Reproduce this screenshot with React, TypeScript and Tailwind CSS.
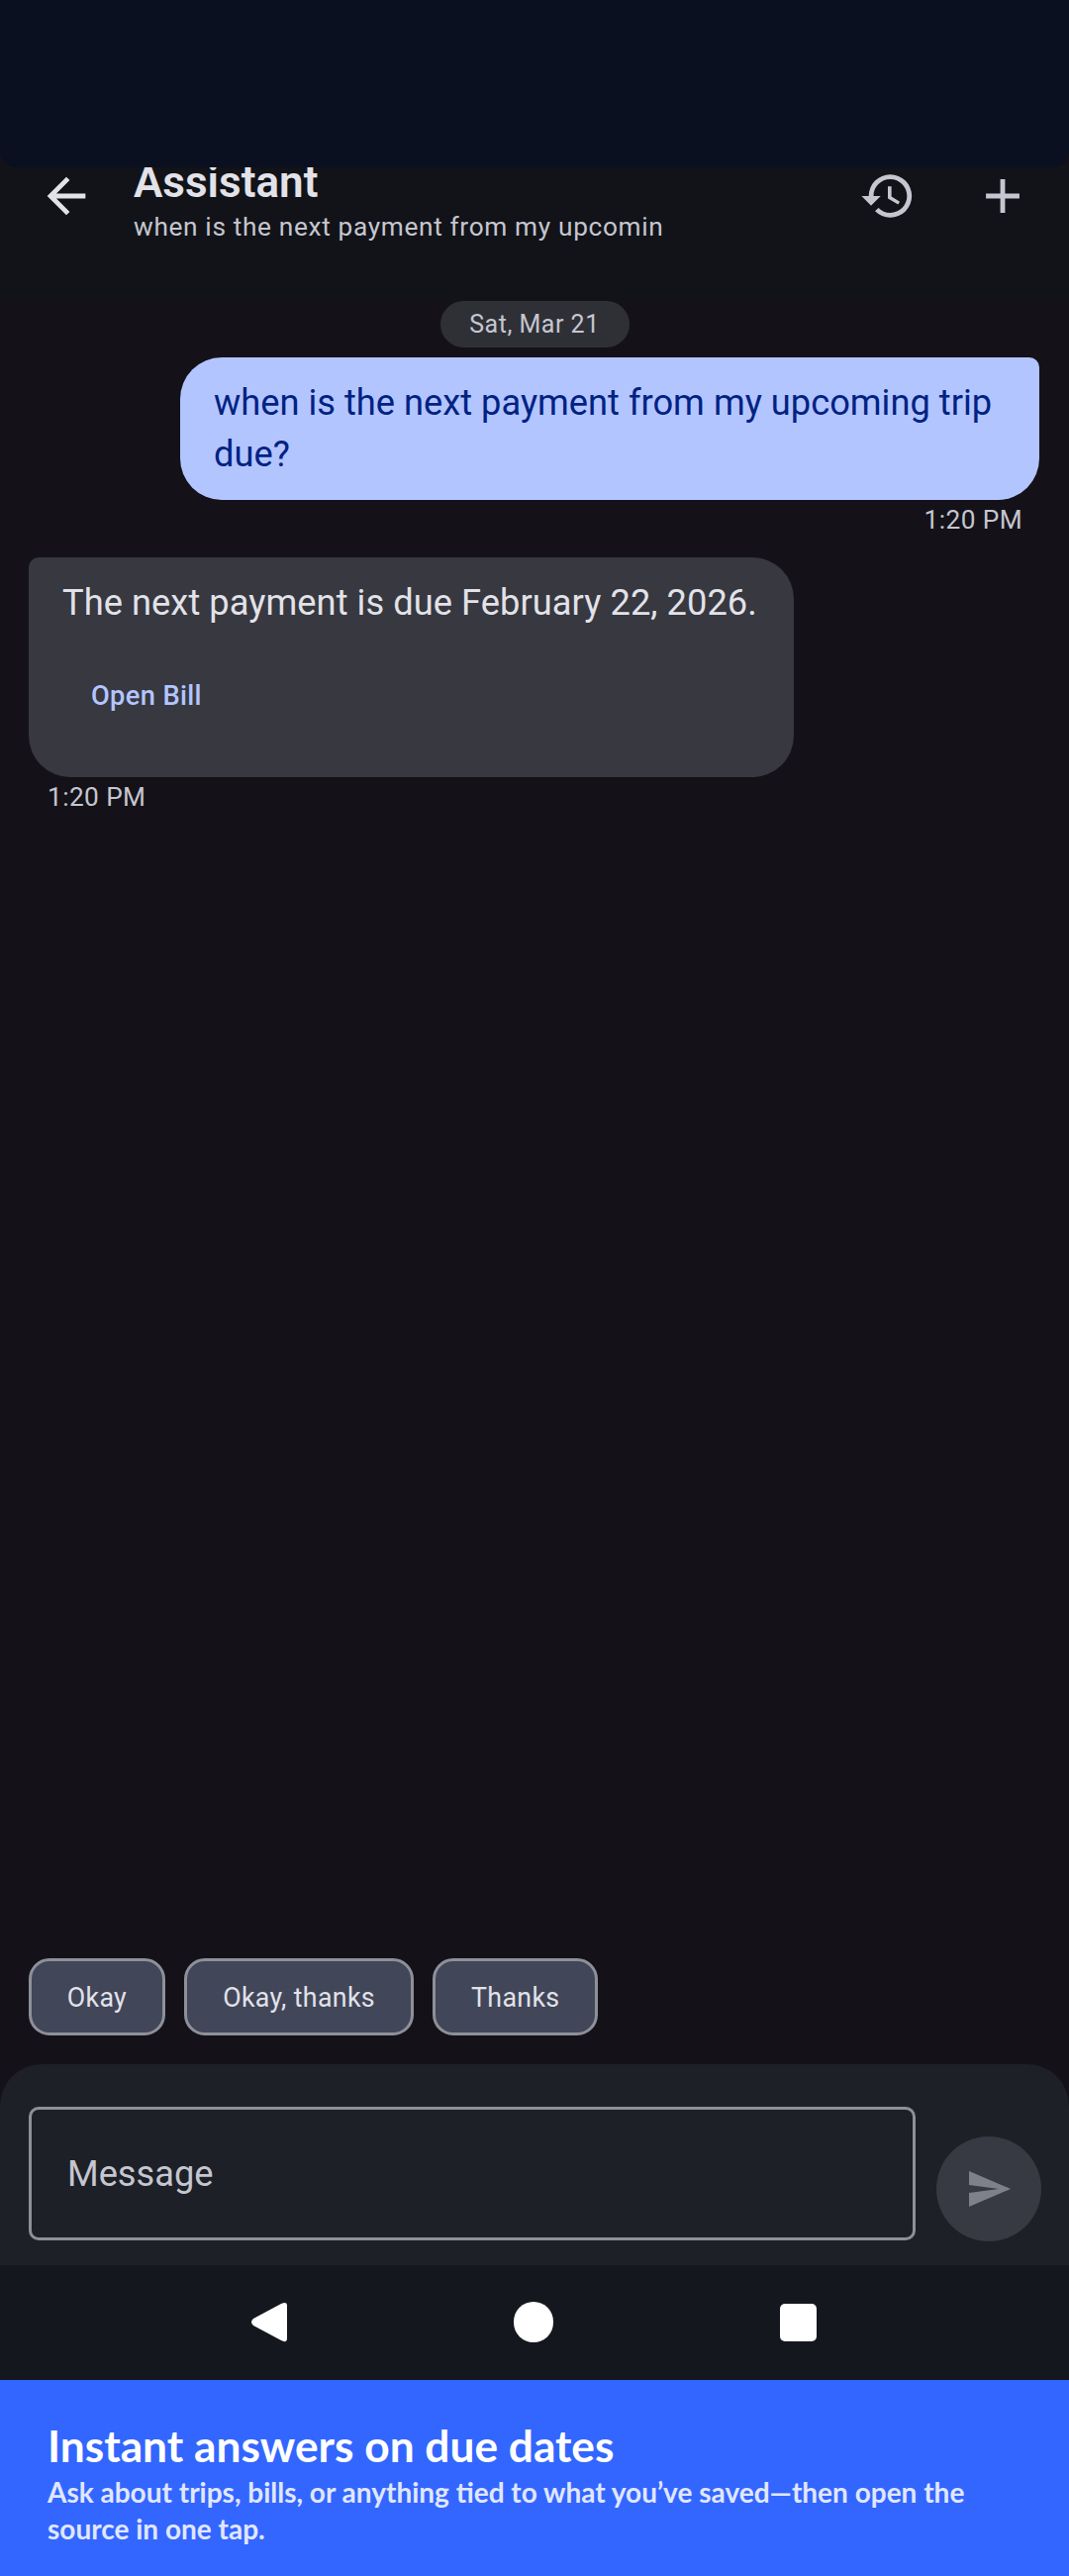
import React from 'react'
import { MdArrowBack, MdHistory, MdAdd, MdSend } from 'react-icons/md'

const REPLIES = ['Okay', 'Okay, thanks', 'Thanks']

function Header() {
  return (
    <header className="h-[135px] shrink-0 flex items-start bg-[#121318] text-[#c5c6d0]">
      <MdArrowBack className="ml-[38px] text-[#e2e2e9] shrink-0" size={58} />
      <div className="ml-[39px] -mt-[8px] flex-1 min-w-0">
        <p className="text-[44px] leading-[46px] font-semibold text-[#e2e2e9]">Assistant</p>
        <p className="text-[26.25px] leading-[36px] mt-[4px] tracking-[0.65px]">when is the next payment from my upcomin</p>
      </div>
      <MdHistory className="shrink-0" size={58} />
      <MdAdd className="ml-[58px] mr-[38px] shrink-0" size={58} />
    </header>
  )
}

function Thread() {
  return (
    <main className="flex-1 flex flex-col">
      <div className="self-center w-[191px] h-[47px] rounded-full bg-[#2f3036] flex items-center justify-center pt-[1px] text-[25px] tracking-[0.5px] text-[#c5c6d0]">
        Sat, Mar 21
      </div>
      <div className="self-end mt-[10px] mr-[30px] w-[868px] h-[144px] rounded-[42px] rounded-tr-[10px] bg-[#b3c5ff] pl-[34px] pr-[30px] py-[20px] text-[36.25px] leading-[52px] text-[#002283]">
        when is the next payment from my upcoming trip due?
      </div>
      <p className="self-end mt-[5px] mr-[47px] h-[30px] text-[26.25px] leading-[30px] tracking-[0.4px] text-[#c5c6d0]">1:20 PM</p>
      <div className="self-start mt-[23px] ml-[29px] w-[773px] h-[222px] rounded-[42px] rounded-tl-[10px] bg-[#373840] pl-[34px] pt-[21px] text-[#e2e2e9]">
        <p className="text-[36.25px] leading-[50px] tracking-[0.05px]">The next payment is due February 22, 2026.</p>
        <p className="mt-[54px] ml-[29px] text-[27.25px] leading-[30px] font-medium tracking-[0.35px] text-[#b3c5ff]">Open Bill</p>
      </div>
      <p className="self-start mt-[5px] ml-[48px] h-[30px] text-[26.25px] leading-[30px] tracking-[0.4px] text-[#c5c6d0]">1:20 PM</p>
      <div className="mt-auto flex gap-[19.5px] pl-[29px] pb-[29px]">
        {REPLIES.map((reply) => (
          <button key={reply} className="h-[78px] px-[35.75px] pt-[2px] rounded-[21px] border-[3px] border-[#8e9099] bg-[#414659] text-[26.75px] tracking-[0.35px] text-[#e2e2e9]">
            {reply}
          </button>
        ))}
      </div>
    </main>
  )
}

function Composer() {
  return (
    <section className="h-[203px] shrink-0 rounded-t-[42px] bg-[#1d2027] flex items-start pt-[43px] pl-[29px]">
      <div className="w-[896px] h-[135px] rounded-[10px] border-[3px] border-[#8e9099] flex items-center pl-[36px] pt-[1px] text-[36.25px] text-[#c5c6d0]">
        Message
      </div>
      <div className="ml-[21px] mt-[30px] w-[106px] h-[106px] rounded-full bg-[#373a42] flex items-center justify-center text-[#7f808c]">
        <MdSend size={48} />
      </div>
    </section>
  )
}

function NavBar() {
  return (
    <nav className="h-[116px] shrink-0 bg-[#15171e] flex items-start pt-[37px] pl-[253px]">
      <svg width="37" height="41" viewBox="0 0 37 41" className="shrink-0">
        <path d="M31 2 L3 17 Q-1 20.5 3 24 L31 39 Q37 42 37 37 L37 4 Q37 -1 31 2 Z" fill="#fff" />
      </svg>
      <div className="ml-[229px] w-[40px] h-[41px] rounded-full bg-white shrink-0" />
      <div className="ml-[229px] mt-[2px] w-[37px] h-[38px] rounded-[5px] bg-white shrink-0" />
    </nav>
  )
}

function Banner() {
  return (
    <footer className="h-[198px] shrink-0 bg-[#3366ff] px-[48px] pt-[40px] font-['Lato',sans-serif]">
      <h1 className="text-[44.25px] leading-[52px] font-bold text-white">Instant answers on due dates</h1>
      <p className="mt-[3px] text-[28px] leading-[36.5px] font-bold text-[#e0e7ff]">
        Ask about trips, bills, or anything tied to what you’ve saved—then open the source in one tap.
      </p>
    </footer>
  )
}

export default function App() {
  return (
    <div className="w-[1080px] h-[2602px] flex flex-col overflow-hidden bg-[#141218] font-['Roboto',sans-serif]">
      <div className="h-[169px] shrink-0 relative z-10 rounded-b-[16px] bg-[#0a1020]" />
      <div className="flex-1 min-h-0 flex flex-col bg-[#141218]">
        <Header />
        <Thread />
      </div>
      <Composer />
      <NavBar />
      <Banner />
    </div>
  )
}
